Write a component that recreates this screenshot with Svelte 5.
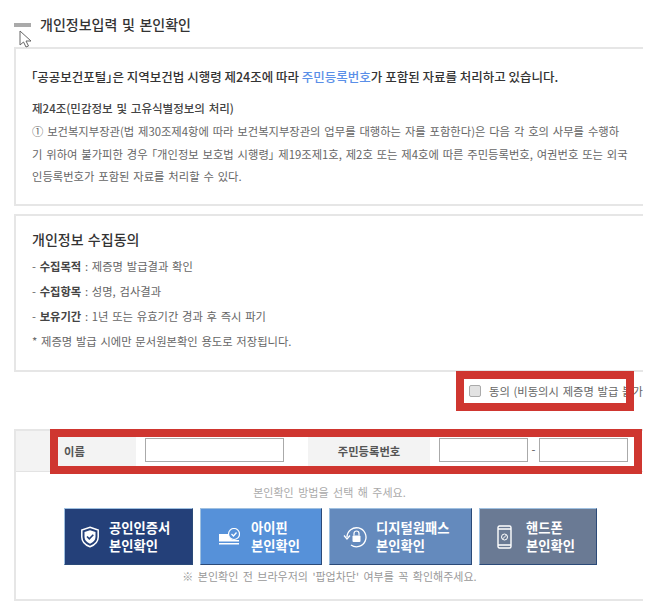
<script>
  const methods = [
    { lines: ['공인인증서', '본인확인'], cls: 'navy', icon: 'shield' },
    { lines: ['아이핀', '본인확인'], cls: 'sky', icon: 'ipin' },
    { lines: ['디지털원패스', '본인확인'], cls: 'steel', icon: 'lock' },
    { lines: ['핸드폰', '본인확인'], cls: 'slate', icon: 'phone' }
  ];
</script>

<div class="page">
  <h2 class="title"><span class="bar"></span>개인정보입력 및 본인확인</h2>
  <svg class="cursor" width="14" height="18" viewBox="0 0 14 18"><path d="M1 1v14l3.5-3 2.5 5 2.5-1-2.5-5h5z" fill="#fff" stroke="#666" stroke-width="1"/></svg>

  <section class="box legal">
    <p class="lead">「공공보건포털」은 지역보건법 시행령 제24조에 따라 <em>주민등록번호</em>가 포함된 자료를 처리하고 있습니다.</p>
    <h4>제24조(민감정보 및 고유식별정보의 처리)</h4>
    <p class="body">① 보건복지부장관(법 제30조제4항에 따라 보건복지부장관의 업무를 대행하는 자를 포함한다)은 다음 각 호의 사무를 수행하</p>
    <p class="body">기 위하여 불가피한 경우 「개인정보 보호법 시행령」 제19조제1호, 제2호 또는 제4호에 따른 주민등록번호, 여권번호 또는 외국</p>
    <p class="body">인등록번호가 포함된 자료를 처리할 수 있다.</p>
  </section>

  <section class="box consent">
    <h3>개인정보 수집동의</h3>
    <p>- <b>수집목적</b> : 제증명 발급결과 확인</p>
    <p>- <b>수집항목</b> : 성명, 검사결과</p>
    <p>- <b>보유기간</b> : 1년 또는 유효기간 경과 후 즉시 파기</p>
    <p>* 제증명 발급 시에만 문서원본확인 용도로 저장됩니다.</p>
  </section>

  <div class="agree">
    <input type="checkbox" id="agree" />
    <label for="agree">동의 (비동의시 제증명 발급 불가</label>
    <span class="red red-agree"></span>
  </div>

  <section class="box verify">
    <div class="row">
      <div class="th name">이름</div>
      <div class="td name-td"><input class="in-name" /></div>
      <div class="th rrn">주민등록번호</div>
      <div class="td rrn-td"><input class="in-rrn" /><span class="dash">-</span><input class="in-rrn" /></div>
      <span class="red red-row"></span>
    </div>
    <p class="hint">본인확인 방법을 선택 해 주세요.</p>
    <div class="buttons">
      {#each methods as m}
        <button class={m.cls}>
          {#if m.icon === 'shield'}
            <svg width="20" height="22" viewBox="0 0 20 22" fill="none"><path d="M10 1.2 18.2 4v7c0 4.8-3.4 8-8.2 9.8C5.200 19 1.800 15.800 1.800 11V4z" stroke="#fff" stroke-width="1.500"/><path d="M10 4.200 15.500 6v5c0 3.200-2.300 5.400-5.500 6.700C6.800 16.400 4.500 14.200 4.500 11V6z" fill="#fff"/><path d="m7 10.500 2.300 2.300 4-4" stroke="#244079" stroke-width="1.600"/></svg>
          {:else if m.icon === 'ipin'}
            <svg width="22" height="18" viewBox="0 0 22 18" fill="none"><path d="M1 6h9.500c.5 4 3.500 6 6 6H21v1.500H1z" fill="#fff"/><rect x="1" y="15" width="20" height="1.500" fill="#fff"/><circle cx="16" cy="6" r="5.500" stroke="#fff" stroke-width="1.200"/><path d="m13.500 6 2 2 3-3.500" stroke="#fff" stroke-width="1.300"/></svg>
          {:else if m.icon === 'lock'}
            <svg width="24" height="22" viewBox="0 0 24 22" fill="none"><path d="M4 11a9.500 9.500 0 1 1 4 8" stroke="#fff" stroke-width="1.300"/><path d="M1 9.500 4 13l3-3.500" stroke="#fff" stroke-width="1.300"/><rect x="9.500" y="9.500" width="8" height="6.500" rx="1" fill="#fff"/><path d="M11 9.500V7.500a2.500 2.500 0 0 1 5 0v2" stroke="#fff" stroke-width="1.200"/></svg>
          {:else}
            <svg width="15" height="24" viewBox="0 0 15 24" fill="none"><rect x="1" y="1" width="13" height="22" rx="1.500" stroke="#fff" stroke-width="1.400"/><path d="M1 4h13M1 20h13" stroke="#fff" stroke-width="1.400"/><circle cx="7.500" cy="12" r="3" stroke="#fff"/><path d="m5.500 14 4-4" stroke="#fff"/></svg>
          {/if}
          <span>{m.lines[0]}<br />{m.lines[1]}</span>
        </button>
      {/each}
    </div>
    <p class="note">※ 본인확인 전 브라우저의 '팝업차단' 여부를 꼭 확인해주세요.</p>
  </section>
</div>

<style>
  :global(body) { margin: 0; background: #fff; }
  .page {
    position: relative;
    width: 643px;
    height: 613px;
    overflow: hidden;
    box-sizing: border-box;
    padding: 13px 0 0 14px;
    font-family: "Noto Sans CJK KR", "Liberation Sans", sans-serif;
    color: #555;
    font-size: 11.300px;
    word-spacing: 1.200px;
  }
  .title {
    display: flex;
    align-items: center;
    gap: 9px;
    margin: 0 0 12px;
    height: 22px;
    font-size: 14px;
    font-weight: 500;
    word-spacing: 1.500px;
    color: #333;
  }
  .bar { width: 17px; height: 4px; background: #aaa; margin-top: 2px; }
  .cursor { position: absolute; left: 19px; top: 30px; }
  .box { border: 2px solid #e6e6e6; border-right: 0; box-sizing: border-box; }
  .legal { height: 159px; padding: 18px 0 0 15px; }
  .lead { margin: 0 0 11px; font-size: 12.500px; font-weight: 500; color: #333; line-height: 20px; font-feature-settings: "palt"; word-spacing: 0; }
  .lead em { font-style: normal; color: #5a8fe8; }
  .legal h4 { margin: 0 0 2px 1px; font-size: 11.500px; font-weight: 500; color: #444; line-height: 20px; }
  .body { margin: 0 0 0 1px; height: 22.500px; line-height: 22.500px; white-space: nowrap; color: #666; font-feature-settings: "palt"; word-spacing: 1.350px; }
  .consent { height: 158px; margin-top: 8px; padding: 12px 0 0 16px; }
  .consent h3 { margin: 0 0 4px; font-size: 14px; font-weight: 500; color: #333; line-height: 22px; }
  .consent p { margin: 0; height: 25px; line-height: 25px; color: #666; }
  .consent b { font-weight: 700; color: #444; }
  .agree { position: relative; display: flex; align-items: center; height: 57px; padding: 0 0 19px 455px; box-sizing: border-box; white-space: nowrap; }
  .agree input { appearance: none; width: 12px; height: 12px; margin: 0 8px 0 0; flex: none; background: #e2e2e2; border: 1px solid #aaa; border-radius: 2px; box-sizing: border-box; }
  .agree label { color: #666; }
  .red { position: absolute; border: 8.500px solid #cf3630; box-sizing: border-box; }
  .red-agree { left: 442px; top: -1px; width: 178px; height: 40px; }
  .verify { height: 172px; }
  .row { position: relative; display: flex; height: 41px; border-bottom: 1px solid #e3e3e3; box-sizing: border-box; }
  .th { background: #f3f3f3; display: flex; align-items: center; font-weight: 700; color: #555; word-spacing: 0; }
  .name { width: 120px; padding-left: 48px; box-sizing: border-box; }
  .name-td { width: 172px; padding-left: 9px; box-sizing: border-box; }
  .rrn { width: 122px; justify-content: center; }
  .td { display: flex; align-items: flex-start; padding-top: 7px; }
  .rrn-td { padding-left: 9px; }
  input:not([type]) { height: 24px; box-sizing: border-box; border: 1px solid #aaa; padding: 0; background: #fff; }
  .in-name { width: 139px; }
  .in-rrn { width: 89px; }
  .dash { width: 11px; text-align: center; line-height: 22px; }
  .red-row { left: 34px; top: -2px; width: 592px; height: 45px; z-index: 2; }
  .hint { margin: 12px 0 0; text-align: center; font-size: 11px; color: #aaa; line-height: 16px; height: 16px; word-spacing: 2px; }
  .buttons { display: flex; gap: 7px; margin: 8px 0 0 48px; }
  button {
    display: flex; align-items: center; gap: 10px;
    height: 57px; box-sizing: border-box; padding: 0;
    border: 1px solid #9fc0e0; border-right-color: #2b4a78; border-bottom-color: #2b4a78;
    color: #fff; font: 700 13.300px/18px "Noto Sans CJK KR", sans-serif; text-align: left; word-spacing: 0;
  }
  .navy { width: 129px; background: #244079; padding-left: 15px; gap: 9px; }
  .sky { width: 122px; background: #5691d9; padding-left: 17px; gap: 11px; }
  .steel { width: 143px; background: #648abd; padding-left: 13px; gap: 9px; }
  .slate { width: 118px; background: #6a7a94; padding-left: 17px; gap: 14px; }
  .note { margin: 3px 0 0; text-align: center; font-size: 11px; color: #999; line-height: 16px; word-spacing: 2px; }
</style>
